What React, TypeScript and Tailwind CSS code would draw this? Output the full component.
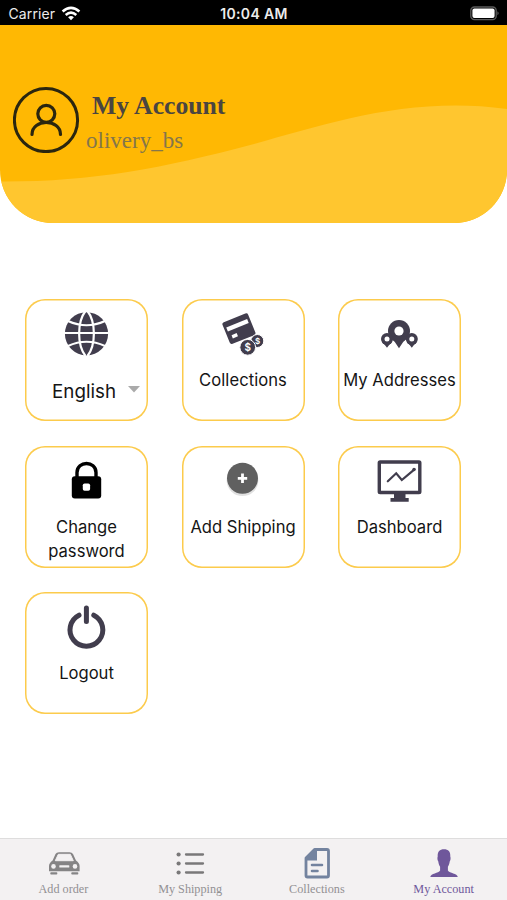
import type { ReactNode } from 'react';

const INK = '#413d4d';

function Card({ children }: { children: ReactNode }) {
  return (
    <div className="flex h-[122px] w-[123px] flex-col items-center rounded-[20px] bg-white pt-[6px] text-[16.6px] leading-[24.5px] whitespace-nowrap text-[#151515] inset-ring-[1.5px] inset-ring-[#fccb4c]">
      {children}
    </div>
  );
}

function Icon({ children }: { children: ReactNode }) {
  return (
    <svg viewBox="0 0 60 60" className="h-[60px] w-[60px] shrink-0" fill="none">
      {children}
    </svg>
  );
}

function Pin({ x, y, r, hole, tip }: { x: number; y: number; r: number; hole: number; tip: number }) {
  return (
    <g>
      <circle cx={x} cy={y} r={r} fill={INK} />
      <path
        d={`M${x - r * 0.85} ${y + r * 0.5}Q${x - r * 0.3} ${y + r} ${x} ${tip}Q${x + r * 0.3} ${y + r} ${x + r * 0.85} ${y + r * 0.5}Z`}
        fill={INK}
      />
      <circle cx={x} cy={y} r={hole} fill="#fff" />
    </g>
  );
}

function Tab({ label, active, children }: { label: string; active?: boolean; children: ReactNode }) {
  return (
    <div className={`flex flex-1 flex-col items-center pt-[6px] ${active ? 'text-[#6f579b]' : 'text-[#929092]'}`}>
      <svg viewBox="0 0 36 36" className="h-[36px] w-[36px]" fill="none">
        {children}
      </svg>
      <span className="pt-px text-[12.2px] leading-[14px]">{label}</span>
    </div>
  );
}

export default function App() {
  return (
    <div className="flex h-[900px] w-[507px] flex-col overflow-hidden bg-white font-['Inter','Liberation_Sans',sans-serif]">
      <div className="grid h-[25px] shrink-0 grid-cols-3 items-center bg-black px-[8.5px] pt-[2px] text-[14px] text-[#ececec]">
        <div className="flex items-center gap-[6px]">
          <span className="tracking-[0.1px]">Carrier</span>
          <svg viewBox="0 0 20 15" className="h-[15px] w-[20px]" fill="none" stroke="#fff" strokeWidth="2.6">
            <path d="M1.6 5.6Q10-1.8 18.4 5.6" />
            <path d="M4.7 9Q10 4.4 15.3 9" />
            <path d="M7.1 11.2Q10 8.6 12.9 11.2L10 14.2Z" fill="#fff" stroke="none" />
          </svg>
        </div>
        <span className="pl-[1px] text-center text-[14px] font-semibold tracking-[0.35px] whitespace-nowrap">10:04 AM</span>
        <svg viewBox="0 0 30 15" className="mr-[-1.5px] h-[15px] w-[30px] justify-self-end" fill="none">
          <rect x="0.8" y="1" width="25.4" height="12.6" rx="3.6" stroke="#5b5b5b" strokeWidth="1.3" />
          <rect x="2.4" y="2.6" width="22.2" height="9.4" rx="2" fill="#fff" />
          <path d="M27.4 5.2Q30 7.2 27.4 9.2Z" fill="#5b5b5b" />
        </svg>
      </div>

      <header className="relative h-[198px] shrink-0 overflow-hidden rounded-b-[53px] bg-[#ffb803] font-['Liberation_Serif',serif]">
        <svg viewBox="0 0 507 198" className="absolute inset-0 h-full w-full">
          <path d="M0 156.5C90 157 160 144 254 119C330 98 410 71 507 84V198H0Z" fill="#ffc62f" />
        </svg>
        <div className="relative flex pt-[61px] pl-[13px]">
          <svg viewBox="0 0 67 67" className="h-[67px] w-[67px] shrink-0" fill="none" stroke="#2b260f" strokeWidth="3">
            <circle cx="33" cy="34" r="31.6" />
            <circle cx="33.3" cy="27.8" r="8.5" strokeWidth="3.2" />
            <path d="M19 48.5C19 32.5 47.5 32.5 47.5 48.5" strokeWidth="3.2" strokeLinecap="round" />
          </svg>
          <div className="flex flex-col pt-[5px] pl-[6px]">
            <span className="pl-[6px] text-[25.7px] leading-[30px] font-bold text-[#4a4540]">My Account</span>
            <span className="pt-[5px] text-[23px] leading-[30px] text-[#85764b]">olivery_bs</span>
          </div>
        </div>
      </header>

      <main className="grid grow grid-cols-[repeat(3,123px)] content-start gap-x-[33.5px] gap-y-[24.5px] pt-[76px] pl-[25px]">
        <Card>
          <Icon>
            <circle cx="29.5" cy="28.8" r="21.6" fill={INK} />
            <g stroke="#fff" strokeWidth="2.2">
              <path d="M7 28H52M11 16Q29.5 24.5 48 16M11 41Q29.5 32.5 48 41" />
              <path d="M28.5 6C20 17 20 40 28.5 51M30.5 6C39 17 39 40 30.5 51" />
            </g>
          </Icon>
          <div className="flex w-full items-center pt-[9px] pl-[27px]">
            <span className="text-[18.8px] leading-[36px]">English</span>
            <svg viewBox="0 0 12 7" className="mt-[-6px] ml-[12px] h-[7px] w-[12px]">
              <path d="M0 0H12L6 6.5Z" fill="#aaa" />
            </svg>
          </div>
        </Card>
        <Card>
          <Icon>
            <g transform="rotate(-22 25.7 23.3)">
              <rect x="12" y="12" width="27.6" height="23.4" rx="2.2" fill={INK} />
              <rect x="14.5" y="17.8" width="22.5" height="4.3" fill="#fff" />
              <rect x="16.5" y="27" width="5.5" height="3.5" fill="#fff" />
            </g>
            <circle cx="44.3" cy="36" r="6.5" fill={INK} stroke="#fff" strokeWidth="1" />
            <circle cx="34.7" cy="42.3" r="7.9" fill={INK} stroke="#fff" strokeWidth="1" />
            <text x="34.7" y="46" textAnchor="middle" fontSize="10" fontWeight="600" fill="#fff">$</text>
            <text x="44.6" y="38.8" textAnchor="middle" fontSize="8" fontWeight="600" fill="#fff">$</text>
          </Icon>
          <span className="pt-[3px] tracking-[0.05px]">Collections</span>
        </Card>
        <Card>
          <Icon>
            <Pin x={29} y={26} r={11} hole={4.6} tip={43.3} />
            <Pin x={17} y={34} r={6} hole={2.5} tip={42.8} />
            <Pin x={41.8} y={34} r={6} hole={2.5} tip={42.8} />
          </Icon>
          <span className="pt-[3px]">My Addresses</span>
        </Card>
        <Card>
          <Icon>
            <path d="M20 26V20.5C20 8.5 39 8.5 39 20.5V26" stroke="#000" strokeWidth="3.4" />
            <rect x="14.8" y="24.2" width="29.4" height="22.2" rx="3" fill="#000" />
            <rect x="25.8" y="31.5" width="7.3" height="7.3" rx="1.8" fill="#fff" />
          </Icon>
          <span className="pt-[3px] text-center">Change<br />password</span>
        </Card>
        <Card>
          <Icon>
            <circle cx="29.5" cy="28.2" r="15.9" fill="#000" opacity="0.12" />
            <circle cx="29.5" cy="26.3" r="15.5" fill="#606060" />
            <path d="M24.8 26.3H34.2M29.5 21.6V31" stroke="#fff" strokeWidth="2.8" />
          </Icon>
          <span className="pt-[3px]">Add Shipping</span>
        </Card>
        <Card>
          <Icon>
            <rect x="9.3" y="10" width="40.5" height="30.5" rx="0.8" stroke={INK} strokeWidth="3.4" />
            <path d="M24 41.5H35.5V46H38.7V49.8H20.5V46H24Z" fill={INK} />
            <path d="M17.8 29.3L26.2 21.3L31.8 28L44.5 17.3" stroke={INK} strokeWidth="2.2" strokeLinecap="round" />
            <circle cx="44" cy="17.5" r="1.7" fill={INK} />
          </Icon>
          <span className="pt-[3px]">Dashboard</span>
        </Card>
        <Card>
          <Icon>
            <path d="M22 17.2A16.4 16.4 0 1 0 36.8 17.2M29.4 10V23.5" stroke={INK} strokeWidth="5" strokeLinecap="round" />
          </Icon>
          <span className="pt-[3px]">Logout</span>
        </Card>
      </main>

      <nav className="flex h-[62px] shrink-0 border-t border-[#dedddd] bg-[#f3f1f2] font-['Liberation_Serif',serif]">
        <Tab label="Add order">
          <path d="M10.5 9Q11.5 7.2 14 7.2H24.500Q27 7.2 28 9L31 15.5Q34.600 18 34.600 21V26.300H4V21Q4 18 7.600 15.500Z" fill="#858485" />
          <path d="M13.3 9.3H25.3L28.300 15.700H10.300Z" fill="#f3f1f2" stroke="#f3f1f2" strokeWidth="1" strokeLinejoin="round" />
          <rect x="5.3" y="27.2" width="7" height="2.4" rx="0.8" fill="#858485" />
          <rect x="26.3" y="27.2" width="7" height="2.4" rx="0.8" fill="#858485" />
          <circle cx="8.5" cy="21.4" r="2.3" fill="#f3f1f2" />
          <circle cx="30" cy="21.4" r="2.3" fill="#f3f1f2" />
          <rect x="14.3" y="20.2" width="10" height="2.4" rx="0.6" fill="#f3f1f2" />
        </Tab>
        <Tab label="My Shipping">
          <g fill="#797879">
            <circle cx="6.6" cy="9.5" r="2.1" />
            <circle cx="6.6" cy="18.5" r="2.1" />
            <circle cx="6.6" cy="27.5" r="2.1" />
          </g>
          <path d="M14 9.5H31M14 18.5H31M14 27.5H31" stroke="#797879" strokeWidth="2.3" strokeLinecap="round" />
        </Tab>
        <Tab label="Collections">
          <path d="M15.5 4.5H28Q29.5 4.5 29.5 6V30.5Q29.5 32 28 32H8.5Q7 32 7 30.5V13Z" stroke="#73839f" strokeWidth="2.8" strokeLinejoin="round" />
          <path d="M18 4.5V15.5H6.5V13L15 4.5Z" fill="#73839f" />
          <path d="M13 20H23M13 26H18.5" stroke="#73839f" strokeWidth="2.6" strokeLinecap="round" />
        </Tab>
        <Tab label="My Account" active>
          <path d="M18 4.3C22.3 4.3 24.6 6.8 24.3 11.5C24.9 13 24.5 15.5 23.7 16.5C23.5 18.8 22.7 20.5 21.9 21.7V25.5C23.5 28.5 31.3 28 31.8 32H4.3C4.8 28 12.5 28.5 14.1 25.5V21.7C13.3 20.5 12.5 18.8 12.3 16.5C11.5 15.5 11.1 13 11.7 11.5C11.4 6.8 13.7 4.3 18 4.3Z" fill="#6f579b" />
        </Tab>
      </nav>
    </div>
  );
}
